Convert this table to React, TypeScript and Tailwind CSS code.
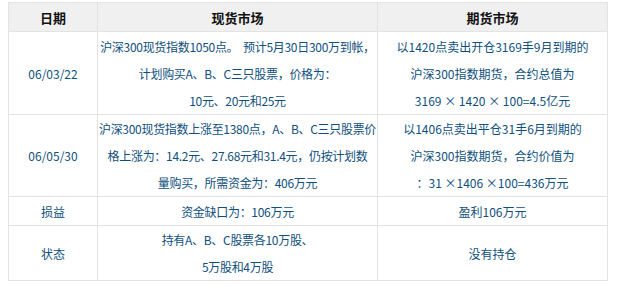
const cell = "border border-[#e3e3e3] text-center align-middle p-0 whitespace-nowrap";

const rows: { date: string; spot: string[]; futures: string[]; h: string }[] = [
  {
    date: "06/03/22",
    spot: [
      "沪深300现货指数1050点。  预计5月30日300万到帐，",
      "计划购买A、B、C三只股票，价格为：",
      "10元、20元和25元",
    ],
    futures: [
      "以1420点卖出开仓3169手9月到期的",
      "沪深300指数期货，合约总值为",
      "3169 × 1420 × 100=4.5亿元",
    ],
    h: "h-[83px]",
  },
  {
    date: "06/05/30",
    spot: [
      "沪深300现货指数上涨至1380点，A、B、C三只股票价",
      "格上涨为：14.2元、27.68元和31.4元，仍按计划数",
      "量购买，所需资金为：406万元",
    ],
    futures: [
      "以1406点卖出平仓31手6月到期的",
      "沪深300指数期货，合约价值为",
      "：31 ×1406 ×100=436万元",
    ],
    h: "h-[81px]",
  },
  {
    date: "损益",
    spot: ["资金缺口为：106万元"],
    futures: ["盈利106万元"],
    h: "h-[29px]",
  },
  {
    date: "状态",
    spot: ["持有A、B、C股票各10万股、", "5万股和4万股"],
    futures: ["没有持仓"],
    h: "h-[55px]",
  },
];

function Lines({ lines }: { lines: string[] }) {
  return (
    <>
      {lines.map((l, i) => (
        <div key={i} className="whitespace-pre">
          {l}
        </div>
      ))}
    </>
  );
}

export default function App() {
  return (
    <div
      className="w-[619px] h-[285px] bg-white pt-[2px] pl-[8px] overflow-hidden"
      style={{ fontFamily: '"Noto Sans CJK SC", "Noto Sans", sans-serif' }}
    >
      <table className="table-fixed border-collapse w-[599px] text-[12px] leading-[27px] text-[#0f4f7d]">
        <colgroup>
          <col className="w-[89px]" />
          <col className="w-[280px]" />
          <col className="w-[230px]" />
        </colgroup>
        <thead>
          <tr className="h-[29px] bg-[#f0f0f0]">
            <th className={`${cell} text-[13px] font-bold text-[#111]`}>日期</th>
            <th className={`${cell} text-[13px] font-bold text-[#111]`}>现货市场</th>
            <th className={`${cell} text-[13px] font-bold text-[#111]`}>期货市场</th>
          </tr>
        </thead>
        <tbody>
          {rows.map((r) => (
            <tr key={r.date} className={r.h}>
              <td className={cell}>{r.date}</td>
              <td className={`${cell} tracking-[-0.3px]`}>
                <Lines lines={r.spot} />
              </td>
              <td className={cell}>
                <Lines lines={r.futures} />
              </td>
            </tr>
          ))}
        </tbody>
      </table>
    </div>
  );
}
